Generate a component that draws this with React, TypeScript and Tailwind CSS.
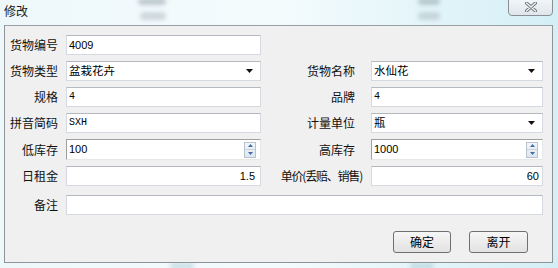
import React from "react";

const cjk = { fontFamily: '"Noto Sans CJK SC", "Noto Sans", sans-serif' };
const lat = { fontFamily: '"Liberation Sans", "Noto Sans CJK SC", sans-serif' };
const mono = { fontFamily: '"Liberation Mono", "Noto Sans CJK SC", monospace' };

function TextBox({ value, right, pr, m }: { value?: string; right?: boolean; pr?: string; m?: boolean }) {
  return (
    <div
      className={`h-[20px] w-full bg-white border border-[#d5d9e0] border-t-[#b4b8bf] flex items-center ${m ? "text-[10px]" : "text-[11px]"} text-black leading-none ${right ? "justify-end" : "pl-[2px]"} ${pr ?? ""}`}
      style={m ? mono : lat}
    >
      {value}
    </div>
  );
}

function Combo({ value }: { value: string }) {
  return (
    <div className="h-[20px] w-full bg-white border border-[#d5d9e0] border-t-[#b4b8bf] flex items-center justify-between pl-[2px] pr-[7px] text-[11.5px] text-black leading-none" style={cjk}>
      <span>{value}</span>
      <svg width="7" height="4" viewBox="0 0 7 4">
        <path d="M0 0H7L3.5 4Z" fill="#111" />
      </svg>
    </div>
  );
}

function Spin({ value }: { value: string }) {
  return (
    <div className="h-[21px] w-full bg-white border border-[#a0a0a0] border-r-[#e8e8e8] border-b-[#e8e8e8] flex items-center justify-between pl-[2px] pr-[4px] text-[11px] text-black leading-none" style={lat}>
      <span>{value}</span>
      <div className="flex flex-col w-[12px] h-[16px] border border-[#b9c3cf] bg-gradient-to-b from-[#f3f6fa] to-[#dfe6ee]">
        <div className="flex-1 flex items-center justify-center border-b border-[#c9d2dc]">
          <svg width="5" height="3" viewBox="0 0 5 3"><path d="M0 3L2.5 0L5 3Z" fill="#3f6ea8" /></svg>
        </div>
        <div className="flex-1 flex items-center justify-center">
          <svg width="5" height="3" viewBox="0 0 5 3"><path d="M0 0H5L2.5 3Z" fill="#3f6ea8" /></svg>
        </div>
      </div>
    </div>
  );
}

function Label({ text, pr, extra }: { text: string; pr: string; extra?: string }) {
  return (
    <div className={`text-right text-[12px] text-[#111] leading-none whitespace-nowrap ${pr} ${extra ?? ""}`} style={cjk}>
      {text}
    </div>
  );
}

function Row({ mt, children }: { mt: string; children: React.ReactNode }) {
  return <div className={`grid grid-cols-[61px_195px_110px_172px] items-center ${mt}`}>{children}</div>;
}

export default function App() {
  return (
    <div className="relative w-[558px] h-[268px] overflow-hidden bg-gradient-to-r from-[#eef8fb] via-[#f4fbfd] to-[#d4eff6]">
      {/* blurred background blobs seen through the glass */}
      <div className="absolute left-[138px] top-[-2px] w-[28px] h-[7px] rounded-full bg-[#8d9aa3] opacity-50 blur-[2px]" />
      <div className="absolute left-[140px] top-[12px] w-[26px] h-[8px] rounded-full bg-[#9aa5ad] opacity-40 blur-[2px]" />
      <div className="absolute left-[418px] top-[-2px] w-[22px] h-[7px] rounded-full bg-[#8d9aa3] opacity-50 blur-[2px]" />
      <div className="absolute left-[418px] top-[12px] w-[22px] h-[8px] rounded-full bg-[#9aa5ad] opacity-40 blur-[2px]" />
      <div className="absolute left-[170px] top-[263px] w-[24px] h-[6px] rounded-full bg-[#8fb6c8] opacity-40 blur-[2px]" />
      <div className="absolute left-[410px] top-[263px] w-[24px] h-[6px] rounded-full bg-[#8fb6c8] opacity-40 blur-[2px]" />

      <div className="relative flex flex-col h-full">
        {/* title bar */}
        <div className="flex items-start justify-between h-[25px]">
          <div className="pl-[4px] pt-[4px] text-[12px] leading-[14px] text-[#1a1a1a]" style={cjk}>修改</div>
          <div className="mr-[5px] mt-[-3px] w-[45px] h-[19px] rounded-b-[4px] border border-[#8a8f95] bg-gradient-to-b from-[#f4f7f9] to-[#dfe6eb] flex items-center justify-center">
            <svg width="12" height="10" viewBox="0 0 12 10">
              <path d="M1.5 1L10.5 9M10.5 1L1.5 9" stroke="#6d7379" strokeWidth="3.2" strokeLinecap="round" />
              <path d="M1.5 1L10.5 9M10.5 1L1.5 9" stroke="#f4f4f4" strokeWidth="1.4" strokeLinecap="round" />
            </svg>
          </div>
        </div>

        {/* client area */}
        <div className="ml-[4px] mr-[5px] h-[238px] bg-[#f0f0f0] border border-[#8f9496] border-t-[#9a9fa3] flex flex-col">
          <Row mt="mt-[9px]">
            <Label text="货物编号" pr="pr-[8px]" />
            <TextBox value="4009" />
            <div />
            <div />
          </Row>
          <Row mt="mt-[6px]">
            <Label text="货物类型" pr="pr-[8px]" />
            <Combo value="盆栽花卉" />
            <Label text="货物名称" pr="pr-[16px]" />
            <Combo value="水仙花" />
          </Row>
          <Row mt="mt-[6px]">
            <Label text="规格" pr="pr-[8px]" />
            <TextBox value="4" m />
            <Label text="品牌" pr="pr-[16px]" />
            <TextBox value="4" m />
          </Row>
          <Row mt="mt-[6px]">
            <Label text="拼音简码" pr="pr-[8px]" />
            <TextBox value="SXH" m />
            <Label text="计量单位" pr="pr-[16px]" />
            <Combo value="瓶" />
          </Row>
          <Row mt="mt-[6px]">
            <Label text="低库存" pr="pr-[8px]" />
            <Spin value="100" />
            <Label text="高库存" pr="pr-[16px]" />
            <Spin value="1000" />
          </Row>
          <Row mt="mt-[6px]">
            <Label text="日租金" pr="pr-[8px]" />
            <TextBox value="1.5" right pr="pr-[5px]" />
            <Label text="单价(丢赔、销售)" pr="pr-[9px]" extra="tracking-[-1.2px]" />
            <TextBox value="60" right pr="pr-[3px]" />
          </Row>
          <div className="grid grid-cols-[61px_477px] items-center mt-[9px]">
            <Label text="备注" pr="pr-[8px]" />
            <TextBox />
          </div>
          <div className="flex justify-end gap-[18px] mt-[16px] pr-[24px]">
            <button className="w-[58px] h-[22px] rounded-[3px] border border-[#707070] bg-gradient-to-b from-[#f6f6f6] to-[#e2e2e2] text-[12px] text-black leading-none" style={cjk}>确定</button>
            <button className="w-[59px] h-[22px] rounded-[3px] border border-[#707070] bg-gradient-to-b from-[#f6f6f6] to-[#e2e2e2] text-[12px] text-black leading-none" style={cjk}>离开</button>
          </div>
        </div>
      </div>
    </div>
  );
}
